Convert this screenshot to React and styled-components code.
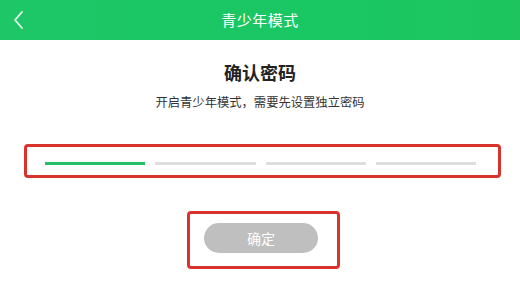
import styled, { createGlobalStyle } from "styled-components";

const GlobalStyle = createGlobalStyle`
  html, body {
    margin: 0;
    padding: 0;
    background: #ffffff;
  }
  body {
    font-family: "Noto Sans CJK SC", "Noto Sans", sans-serif;
  }
`;

const Page = styled.div`
  width: 520px;
  height: 294px;
  overflow: hidden;
  background: #fff;
`;

const Header = styled.header`
  height: 40px;
  background: linear-gradient(90deg, #1ec667 0%, #19c763 60%, #1ec55f 100%);
  display: flex;
  align-items: center;
  justify-content: center;
  position: relative;
  color: #fff;
`;

const BackBtn = styled.button`
  position: absolute;
  left: 8px;
  top: 8px;
  width: 20px;
  height: 24px;
  padding: 0;
  border: 0;
  background: none;
  display: flex;
  align-items: center;
  justify-content: center;
`;

const HeaderTitle = styled.h1`
  margin: 0;
  font-size: 15px;
  font-weight: 400;
  line-height: 20px;
  letter-spacing: 0.5px;
`;

const Body = styled.main`
  display: flex;
  flex-direction: column;
  align-items: center;
`;

const Title = styled.h2`
  margin: 20px 0 0;
  font-size: 18px;
  line-height: 24px;
  font-weight: 700;
  color: #222;
`;

const Subtitle = styled.p`
  margin: 9px 0 0;
  font-size: 12.3px;
  line-height: 18px;
  color: #333;
`;

const Highlight = styled.div`
  border: 3px solid #d8332d;
  border-radius: 4px;
  box-sizing: border-box;
`;

const CodeBox = styled(Highlight)`
  margin-top: 33px;
  width: 477px;
  height: 34px;
  padding: 15px 22px 0 18px;
  display: flex;
  gap: 10px;
  align-self: flex-start;
  margin-left: 24px;
`;

const Bar = styled.span`
  flex: 1;
  height: 3px;
  background: ${({ $active }) => ($active ? "#25c168" : "#dedede")};
`;

const ButtonRow = styled.div`
  margin-top: 33px;
  padding-left: 7px;
  display: flex;
  justify-content: center;
`;

const ButtonBox = styled(Highlight)`
  padding: 9px 19px 13px 14px;
`;

const Confirm = styled.button`
  width: 114px;
  height: 30px;
  border: 0;
  border-radius: 15px;
  background: #bfbfbf;
  color: #fff;
  font-family: inherit;
  font-size: 14px;
  display: block;
`;

export default function App() {
  const filled = 1;
  return (
    <Page>
      <GlobalStyle />
      <Header>
        <BackBtn aria-label="返回">
          <svg width="12" height="20" viewBox="0 0 12 20">
            <path
              d="M10 2 L3 10 L10 18"
              fill="none"
              stroke="#e8fff0"
              strokeWidth="1.8"
              strokeLinecap="round"
              strokeLinejoin="round"
            />
          </svg>
        </BackBtn>
        <HeaderTitle>青少年模式</HeaderTitle>
      </Header>
      <Body>
        <Title>确认密码</Title>
        <Subtitle>开启青少年模式，需要先设置独立密码</Subtitle>
        <CodeBox>
          {[0, 1, 2, 3].map((i) => (
            <Bar key={i} $active={i < filled} />
          ))}
        </CodeBox>
        <ButtonRow>
          <ButtonBox>
            <Confirm>确定</Confirm>
          </ButtonBox>
        </ButtonRow>
      </Body>
    </Page>
  );
}
